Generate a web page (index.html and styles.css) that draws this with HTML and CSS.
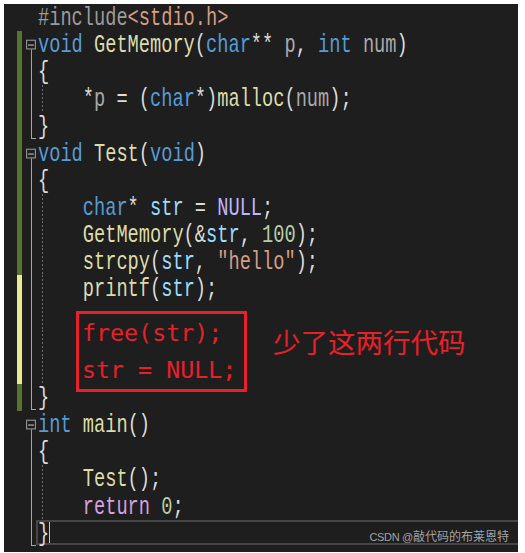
FILE: index.html
```html
<!DOCTYPE html>
<html lang="zh">
<head>
<meta charset="utf-8">
<title>Code</title>
<link rel="stylesheet" href="styles.css">
</head>
<body>
<div class="editor">
  <div class="line"><span class="pad"></span><span class="bar"></span><span class="gap"></span><span class="fold"></span><div class="code"><span class="txt"><span class="pp">#include</span><span class="inc">&lt;stdio.h&gt;</span></span></div></div>
  <div class="line"><span class="pad"></span><span class="bar g"></span><span class="gap"></span><svg class="fold" width="10" height="28" viewBox="0 0 10 28"><rect x="0.5" y="9.5" width="9" height="9" fill="#1e1e1e" stroke="#a5a5a5"/><path d="M2 14.5h6" stroke="#d0d0d0"/><path d="M5.5 19v9" stroke="#a5a5a5"/></svg><div class="code"><span class="txt"><span class="kw">void</span> <span class="fn">GetMemory</span>(<span class="kw">char</span>** <span class="pa">p</span>, <span class="kw">int</span> <span class="pa">num</span>)</span></div></div>
  <div class="line"><span class="pad"></span><span class="bar g"></span><span class="gap"></span><span class="fold mid"></span><div class="code"><span class="txt">{</span></div></div>
  <div class="line"><span class="pad"></span><span class="bar g"></span><span class="gap"></span><span class="fold mid"></span><div class="code guide"><span class="txt">    *<span class="pa">p</span> = (<span class="kw">char</span>*)<span class="fn">malloc</span>(<span class="pa">num</span>);</span></div></div>
  <div class="line"><span class="pad"></span><span class="bar g"></span><span class="gap"></span><span class="fold end"></span><div class="code"><span class="txt">}</span></div></div>
  <div class="line"><span class="pad"></span><span class="bar g"></span><span class="gap"></span><svg class="fold" width="10" height="28" viewBox="0 0 10 28"><rect x="0.5" y="9.5" width="9" height="9" fill="#1e1e1e" stroke="#a5a5a5"/><path d="M2 14.5h6" stroke="#d0d0d0"/><path d="M5.5 19v9" stroke="#a5a5a5"/></svg><div class="code"><span class="txt"><span class="kw">void</span> <span class="fn">Test</span>(<span class="kw">void</span>)</span></div></div>
  <div class="line"><span class="pad"></span><span class="bar g"></span><span class="gap"></span><span class="fold mid"></span><div class="code"><span class="txt">{</span></div></div>
  <div class="line"><span class="pad"></span><span class="bar g"></span><span class="gap"></span><span class="fold mid"></span><div class="code guide"><span class="txt">    <span class="kw">char</span>* <span class="var">str</span> = <span class="mac">NULL</span>;</span></div></div>
  <div class="line"><span class="pad"></span><span class="bar g"></span><span class="gap"></span><span class="fold mid"></span><div class="code guide"><span class="txt">    <span class="fn">GetMemory</span>(&amp;<span class="var">str</span>, <span class="num">100</span>);</span></div></div>
  <div class="line"><span class="pad"></span><span class="bar g"></span><span class="gap"></span><span class="fold mid"></span><div class="code guide"><span class="txt">    <span class="fn">strcpy</span>(<span class="var">str</span>, <span class="str">"hello"</span>);</span></div></div>
  <div class="line"><span class="pad"></span><span class="bar y"></span><span class="gap"></span><span class="fold mid"></span><div class="code guide"><span class="txt">    <span class="fn">printf</span>(<span class="var">str</span>);</span></div></div>
  <div class="line"><span class="pad"></span><span class="bar y"></span><span class="gap"></span><span class="fold mid"></span><div class="code guide"></div></div>
  <div class="line"><span class="pad"></span><span class="bar y"></span><span class="gap"></span><span class="fold mid"></span><div class="code guide"></div></div>
  <div class="line"><span class="pad"></span><span class="bar y"></span><span class="gap"></span><span class="fold mid"></span><div class="code guide"></div></div>
  <div class="line"><span class="pad"></span><span class="bar g"></span><span class="gap"></span><span class="fold end"></span><div class="code"><span class="txt">}</span></div></div>
  <div class="line"><span class="pad"></span><span class="bar"></span><span class="gap"></span><svg class="fold" width="10" height="28" viewBox="0 0 10 28"><rect x="0.5" y="9.5" width="9" height="9" fill="#1e1e1e" stroke="#a5a5a5"/><path d="M2 14.5h6" stroke="#d0d0d0"/><path d="M5.5 19v9" stroke="#a5a5a5"/></svg><div class="code"><span class="txt"><span class="kw">int</span> <span class="fn">main</span>()</span></div></div>
  <div class="line"><span class="pad"></span><span class="bar"></span><span class="gap"></span><span class="fold mid"></span><div class="code"><span class="txt">{</span></div></div>
  <div class="line"><span class="pad"></span><span class="bar"></span><span class="gap"></span><span class="fold mid"></span><div class="code guide"><span class="txt">    <span class="fn">Test</span>();</span></div></div>
  <div class="line"><span class="pad"></span><span class="bar"></span><span class="gap"></span><span class="fold mid"></span><div class="code guide"><span class="txt">    <span class="ctl">return</span> <span class="num">0</span>;</span></div></div>
  <div class="line"><span class="pad"></span><span class="bar"></span><span class="gap"></span><span class="fold end"></span><div class="code current"><span class="txt">}</span></div></div>

  <div class="anno-box">free(str);
str = NULL;</div>
  <div class="anno-text">少了这两行代码</div>
  <div class="mark"><span class="mark-lat">CSDN @</span>敲代码的布莱恩特</div>
</div>
</body>
</html>
```

FILE: styles.css
```css
html, body {
  margin: 0;
  padding: 0;
  background: #ffffff;
  overflow: hidden;
}

.editor {
  position: relative;
  width: 525px;
  height: 553px;
  box-sizing: border-box;
  border-style: solid;
  border-color: #ffffff;
  border-width: 4px 7px 1px 4px;
  background: #1e1e1e;
  overflow: hidden;
  color: #dcdcdc;
}

.line {
  display: flex;
  align-items: flex-start;
  height: 27.15px;
}

.pad { width: 13px; flex: none; height: 100%; }
.bar { width: 5px; flex: none; height: 100%; }
.bar.g { background: #57742f; }
.bar.y { background: #ebeb8f; }
.gap { width: 4px; flex: none; height: 100%; }

.fold {
  width: 10px;
  flex: none;
  height: 100%;
  display: block;
  overflow: visible;
}
.fold.mid {
  background: linear-gradient(#a5a5a5, #a5a5a5) no-repeat 5px 0 / 1px 100%;
}
.fold.end {
  background:
    linear-gradient(#a5a5a5, #a5a5a5) no-repeat left 5px top 0 / 1px calc(100% - 1px),
    linear-gradient(#a5a5a5, #a5a5a5) no-repeat left 5px bottom 1px / 5px 1px;
}

.code {
  flex: 1;
  height: 100%;
  box-sizing: border-box;
  border-left: 2px solid transparent;
  white-space: pre;
}
.code.guide {
  background: linear-gradient(#6e6e6e 50%, transparent 50%) repeat-y 4px 0 / 1px 4px;
}
.code.current {
  height: 25px;
  border: 2px solid #464646;
  border-right: none;
  background: linear-gradient(#c8c8c8, #c8c8c8) no-repeat 11px 0 / 1px 100%;
}
.code.current .txt {
  margin-top: 0;
}

.txt {
  display: inline-block;
  margin-top: 2px;
  font-family: "Liberation Mono", monospace;
  font-size: 25px;
  line-height: 25px;
  transform: scaleX(0.7466);
  transform-origin: 0 0;
  white-space: pre;
}

.pp { color: #9b9b9b; }
.inc { color: #d69d85; }
.kw { color: #569cd6; }
.fn { color: #dcdcaa; }
.pa { color: #a9a9a9; }
.var { color: #9cdcfe; }
.mac { color: #beb7ff; }
.str { color: #d69d85; }
.num { color: #b5cea8; }
.ctl { color: #d8a0df; }

.anno-box {
  position: absolute;
  left: 72px;
  top: 307px;
  border: 3px solid #e8202a;
  padding: 0 8px 1px 3px;
  font-family: "DejaVu Sans Mono", monospace;
  font-size: 23.3px;
  line-height: 37px;
  color: #e8202a;
  white-space: pre;
}

.anno-text {
  position: absolute;
  left: 269px;
  top: 324px;
  font-family: "Noto Sans CJK SC", sans-serif;
  font-size: 27.5px;
  line-height: 1;
  color: #e8202a;
  white-space: nowrap;
}

.mark {
  position: absolute;
  right: 9px;
  top: 526px;
  font-family: "Noto Sans CJK SC", sans-serif;
  font-size: 12px;
  line-height: 1;
  color: rgba(220, 220, 220, 0.72);
  white-space: nowrap;
}
.mark-lat {
  font-family: "Liberation Sans", "Noto Sans CJK SC", sans-serif;
  font-size: 11px;
  letter-spacing: -0.3px;
}
```
